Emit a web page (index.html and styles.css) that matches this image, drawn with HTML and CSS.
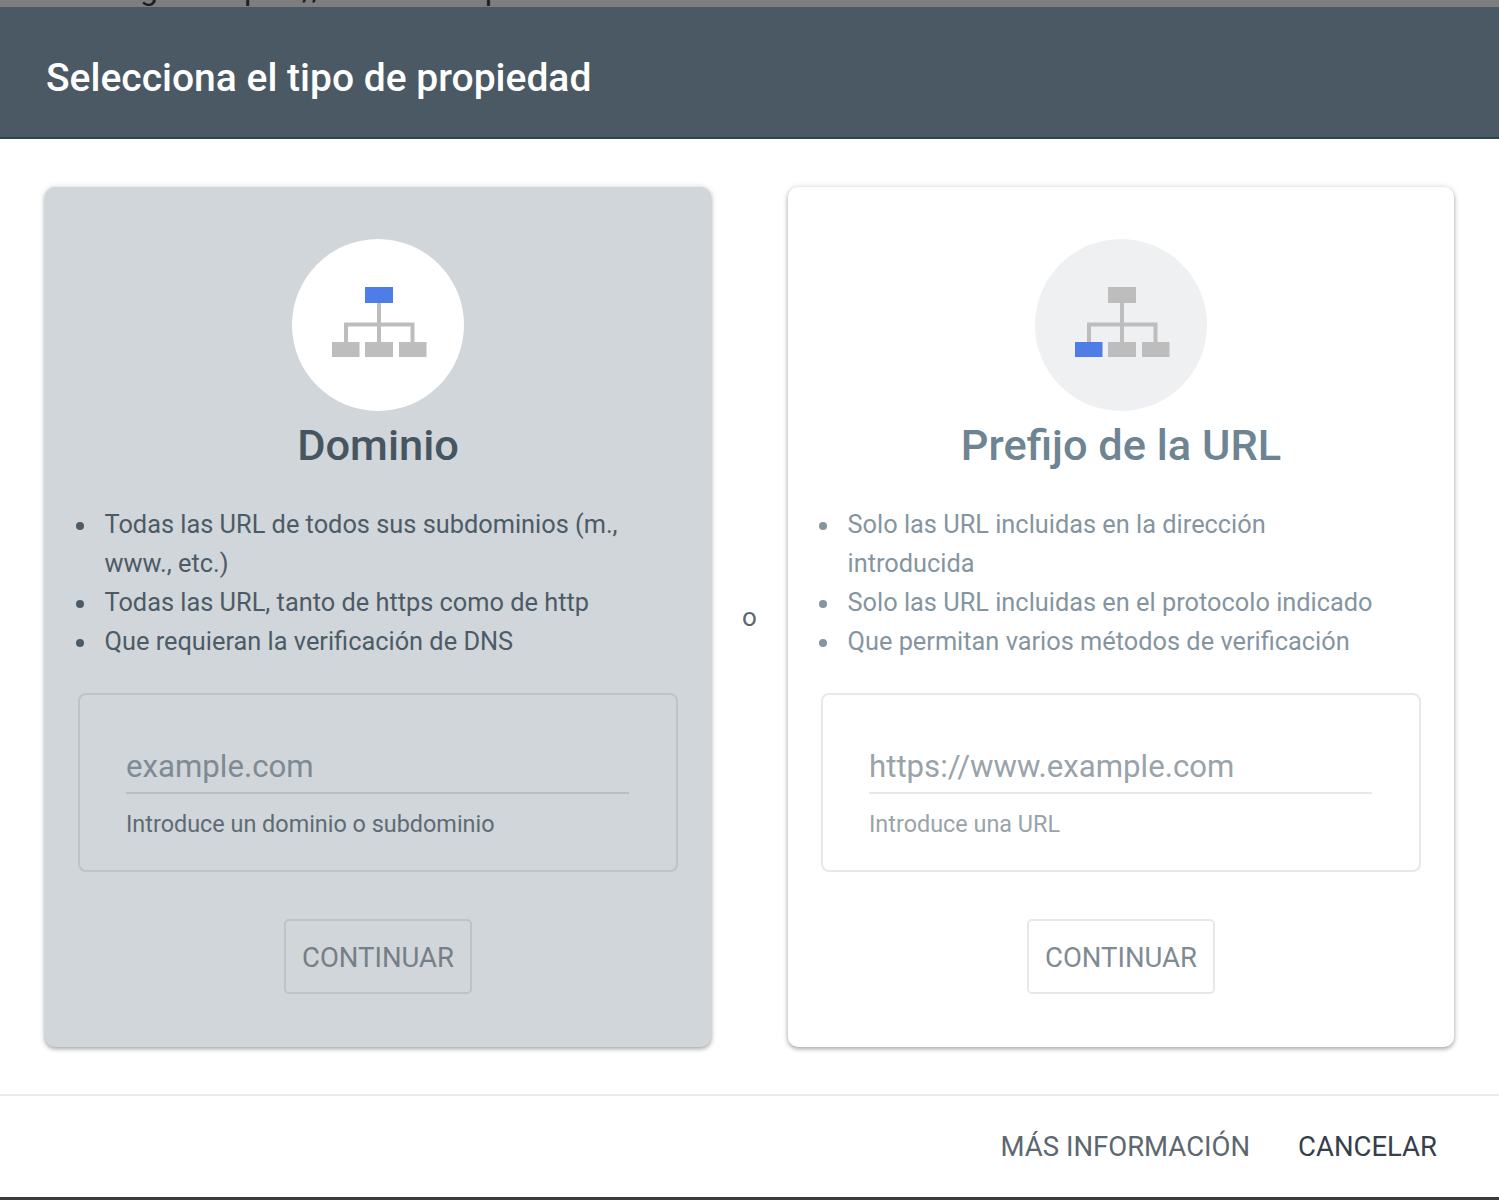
FILE: index.html
```html
<!DOCTYPE html>
<html lang="es">
<head>
<meta charset="utf-8">
<title>Selecciona el tipo de propiedad</title>
<link rel="stylesheet" href="styles.css">
</head>
<body>
<div class="page">
  <div class="backdrop-strip"><span class="frag f1">g</span><span class="frag f2">p</span><span class="frag f3">//</span><span class="frag f4">p</span></div>
  <main class="dialog">
    <header class="dialog-head"><h1>Selecciona el tipo de propiedad</h1></header>
    <section class="dialog-body">
      <article class="card card-active">
        <div class="avatar">
          <svg class="tree" viewBox="0 0 172 172" aria-hidden="true">
            <path class="link" d="M87 64V103M54 103V85.5H120.5V103"/>
            <rect class="box blue" x="73" y="48" width="28" height="16"/>
            <rect class="box" x="40" y="103" width="27.5" height="15"/>
            <rect class="box" x="73" y="103" width="28" height="15"/>
            <rect class="box" x="107" y="103" width="27.5" height="15"/>
          </svg>
        </div>
        <h2>Dominio</h2>
        <ul>
          <li>Todas las URL de todos sus subdominios (m., www., etc.)</li>
          <li>Todas las URL, tanto de https como de http</li>
          <li>Que requieran la verificación de DNS</li>
        </ul>
        <div class="field">
          <div class="field-input">example.com</div>
          <div class="field-help">Introduce un dominio o subdominio</div>
        </div>
        <button class="continue" type="button">CONTINUAR</button>
      </article>
      <div class="or">o</div>
      <article class="card">
        <div class="avatar">
          <svg class="tree" viewBox="0 0 172 172" aria-hidden="true">
            <path class="link" d="M87 64V103M54 103V85.5H120.5V103"/>
            <rect class="box" x="73" y="48" width="28" height="16"/>
            <rect class="box blue" x="40" y="103" width="27.5" height="15"/>
            <rect class="box" x="73" y="103" width="28" height="15"/>
            <rect class="box" x="107" y="103" width="27.5" height="15"/>
          </svg>
        </div>
        <h2>Prefijo de la URL</h2>
        <ul>
          <li>Solo las URL incluidas en la dirección introducida</li>
          <li>Solo las URL incluidas en el protocolo indicado</li>
          <li>Que permitan varios métodos de verificación</li>
        </ul>
        <div class="field">
          <div class="field-input">https://www.example.com</div>
          <div class="field-help">Introduce una URL</div>
        </div>
        <button class="continue" type="button">CONTINUAR</button>
      </article>
    </section>
    <footer class="dialog-foot">
      <button class="foot-btn muted" type="button">MÁS INFORMACIÓN</button>
      <button class="foot-btn" type="button">CANCELAR</button>
    </footer>
  </main>
  <div class="bottom-strip"></div>
</div>
</body>
</html>
```
FILE: styles.css
```css
* { box-sizing: border-box; }
html, body { margin: 0; height: 100%; overflow: hidden; }
body { font-family: Roboto, "Liberation Sans", sans-serif; background: #3a3b3d; }
.page { height: 1200px; display: flex; flex-direction: column; }

.backdrop-strip {
  height: 7px; flex: none; background: #7c7e7f; overflow: hidden;
  display: flex; align-items: flex-start; color: #1d1d1d;
  font-size: 32px; line-height: 32px;
}
.frag { display: block; margin-top: -27px; }
.f1 { margin-left: 140px; }
.f2 { margin-left: 86px; }
.f3 { margin-left: 40px; }
.f4 { margin-left: 160px; }

.dialog { flex: 1; display: flex; flex-direction: column; background: #fff; min-height: 0; }
.dialog-head {
  height: 132px; flex: none; background: #4a5964;
  border-bottom: 2px solid #2c4650;
  display: flex; align-items: center; padding: 12px 46px 0;
}
.dialog-head h1 { margin: 0; color: #fff; font-size: 39px; line-height: 46px; font-weight: 500; letter-spacing: 0; }

.dialog-body {
  height: 955px; flex: none;
  display: flex; align-items: flex-start;
  padding: 48px 46px 0 45px;
}
.card {
  width: 666px; height: 860px; flex: none;
  background: #fff; border-radius: 10px;
  box-shadow: 0 2px 4px rgba(60,64,67,.42), 0 0 7px rgba(60,64,67,.12);
  padding: 52px 32.5px 0;
  display: flex; flex-direction: column; align-items: center;
  color: #85959f;
}
.card-active { background: #d0d6da; color: #4d5b66; }
.avatar {
  width: 172px; height: 172px; flex: none; border-radius: 50%;
  background: #eef0f2;
}
.card-active .avatar { background: #fff; }
.tree { display: block; width: 172px; height: 172px; }
.link { fill: none; stroke: #bdbdbd; stroke-width: 4; }
.box { fill: #bdbdbd; }
.blue { fill: #4f7de8; }

.card h2 {
  margin: 11px 0 0; font-size: 43.4px; line-height: 48px; font-weight: 500;
  color: #6e8492; text-align: center;
}
.card-active h2 { color: #46555f; }

.card ul {
  width: 100%; margin: 35px 0 0; padding: 0 45px 0 0; list-style: none;
  font-size: 25.35px; line-height: 39px;
}
.card li { display: flex; }
.card li::before {
  content: ""; flex: none; width: 8px; height: 8px; margin: 17px 21px 0 -2px;
  border-radius: 50%; background: currentColor;
}

.field {
  width: 600px; height: 179px; flex: none; margin-top: 32px;
  border: 2px solid #e6e8ea; border-radius: 8px;
  padding: 48px 47px 0 46px;
}
.card-active .field { border-color: #bcc3c9; }
.field-input {
  height: 51px; font-size: 31.2px; line-height: 48px;
  color: #99a3aa;
  border-bottom: 2px solid #e6e8ea;
}
.card-active .field-input { color: #7f8a92; border-color: #b7bec4; }
.field-help {
  margin-top: 15px; font-size: 23.4px; line-height: 30px; color: #99a3aa;
}
.card-active .field-help { color: #5f6b74; }

.continue {
  width: 188px; height: 75px; flex: none; margin-top: 47px; padding: 1px 0 0;
  background: transparent; border: 2px solid #e6e8ea; border-radius: 5px;
  font-family: inherit; font-size: 27.5px; font-weight: 400; color: #7f8b93;
}
.card-active .continue { border-color: #bcc3c9; color: #767f86; }

.or {
  width: 77px; flex: none; height: 860px;
  display: flex; align-items: center; justify-content: center;
  font-size: 26px; color: #5b6770;
}

.dialog-foot {
  flex: 1; border-top: 2px solid #e8eaeb;
  display: flex; align-items: center; justify-content: flex-end;
  gap: 48px; padding: 0 62px 0 0;
}
.foot-btn {
  border: 0; background: none; padding: 0;
  font-family: inherit; font-size: 27.5px; color: #354049;
}
.foot-btn.muted { color: #5c6770; }

.bottom-strip { height: 3px; flex: none; background: #3a3b3d; }
```
